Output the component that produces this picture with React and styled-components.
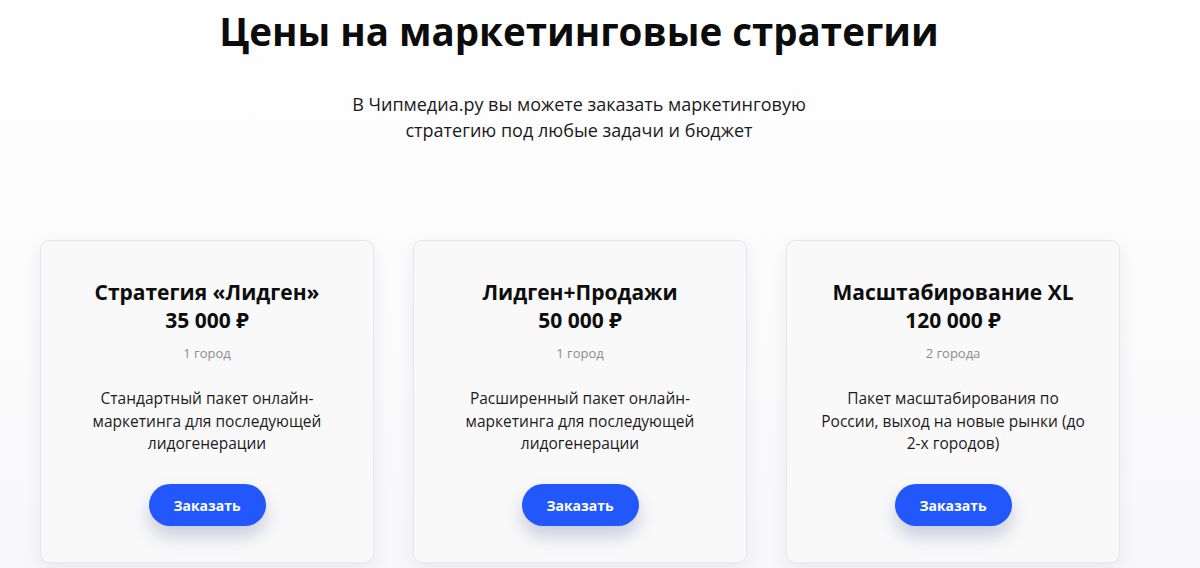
import React from 'react';
import styled, { createGlobalStyle } from 'styled-components';

const GlobalStyle = createGlobalStyle`
  html, body {
    margin: 0;
    padding: 0;
  }
  body {
    font-family: "Open Sans", "Noto Sans", "DejaVu Sans", sans-serif;
    color: #111;
    background: #fafafb;
  }
`;

const plans = [
  {
    title: 'Стратегия «Лидген»',
    price: '35 000 ₽',
    cities: '1 город',
    lines: ['Стандартный пакет онлайн-', 'маркетинга для последующей', 'лидогенерации'],
  },
  {
    title: 'Лидген+Продажи',
    price: '50 000 ₽',
    cities: '1 город',
    lines: ['Расширенный пакет онлайн-', 'маркетинга для последующей', 'лидогенерации'],
  },
  {
    title: 'Масштабирование XL',
    price: '120 000 ₽',
    cities: '2 города',
    lines: ['Пакет масштабирования по', 'России, выход на новые рынки (до', '2-х городов)'],
  },
];

const App = () => {
  return (
    <Page>
      <GlobalStyle />
      <Header>
        <Title>Цены на маркетинговые стратегии</Title>
        <Lead>
          В Чипмедиа.ру вы можете заказать маркетинговую
          <br />
          стратегию под любые задачи и бюджет
        </Lead>
      </Header>

      <Cards>
        {plans.map((p) => (
          <Card key={p.title}>
            <CardTitle>
              {p.title}
              <br />
              {p.price}
            </CardTitle>
            <Cities>{p.cities}</Cities>
            <Description>
              {p.lines.map((l) => (
                <Line key={l}>{l}</Line>
              ))}
            </Description>
            <OrderButton>Заказать</OrderButton>
          </Card>
        ))}
      </Cards>
    </Page>
  );
};

const Page = styled.div`
  width: 1200px;
  height: 568px;
  overflow: hidden;
  background: linear-gradient(180deg, #ffffff 0%, #f8f8fa 100%);
`;

const Header = styled.div`
  display: flex;
  flex-direction: column;
  align-items: center;
  padding-right: 42px;
`;

const Title = styled.h1`
  margin: 8px 0 0;
  font-size: 38.5px;
  line-height: 46px;
  font-weight: 700;
  color: #0c0c0c;
`;

const Lead = styled.p`
  margin: 37px 0 0;
  font-size: 18px;
  line-height: 26px;
  text-align: center;
  color: #1a1a1a;
`;

const Cards = styled.div`
  display: grid;
  grid-template-columns: repeat(3, 334px);
  column-gap: 39px;
  padding: 97px 0 0 40px;
`;

const Card = styled.div`
  box-sizing: border-box;
  height: 323px;
  display: flex;
  flex-direction: column;
  align-items: center;
  padding: 37px 20px 0;
  background: #f9f9fa;
  border: 1px solid #e6e7ee;
  border-radius: 9px;
  box-shadow: 0 6px 18px rgba(40, 45, 70, 0.07);
  text-align: center;
`;

const CardTitle = styled.h3`
  margin: 0;
  font-size: 21px;
  line-height: 28px;
  font-weight: 700;
  color: #0d0d0d;
`;

const Cities = styled.div`
  margin-top: 10px;
  font-size: 13px;
  line-height: 18px;
  color: #8c8c8c;
`;

const Description = styled.p`
  margin: 25px 0 0;
  font-size: 15.5px;
  line-height: 22.5px;
  color: #1c1c1c;
  min-height: 68px;
`;

const Line = styled.span`
  display: block;
  white-space: nowrap;
`;

const OrderButton = styled.button`
  margin-top: 29px;
  width: 117px;
  height: 42px;
  border: none;
  border-radius: 21px;
  background: #2258fb;
  color: #fff;
  font-family: "Open Sans", "Noto Sans", sans-serif;
  font-size: 14px;
  font-weight: 700;
  box-shadow: 0 10px 18px rgba(30, 45, 110, 0.22);
  cursor: pointer;
`;

export default App;
